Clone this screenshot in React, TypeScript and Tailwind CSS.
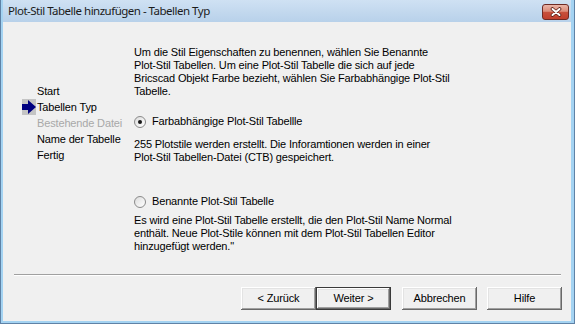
import type { ReactNode } from "react";

const steps = [
  { label: "Start", active: false, disabled: false },
  { label: "Tabellen Typ", active: true, disabled: false },
  { label: "Bestehende Datei", active: false, disabled: true },
  { label: "Name der Tabelle", active: false, disabled: false },
  { label: "Fertig", active: false, disabled: false },
];

function StepArrow() {
  return (
    <svg width="14" height="16" viewBox="0 0 14 16">
      <rect width="14" height="16" fill="#c4c4c4" />
      <polygon points="0,5 6,5 6,1 14,8 6,15 6,11 0,11" fill="#000080" />
    </svg>
  );
}

function CloseButton() {
  return (
    <div className="mt-[1px] flex h-[16px] w-[27px] items-center justify-center rounded-[3px] border border-[#6e2a24] bg-[linear-gradient(#eab5a8_0%,#dc8c7a_45%,#c7503c_52%,#c13f2d_100%)]">
      <svg width="12" height="10" viewBox="0 0 12 10">
        <path d="M2.5 2 L9.5 8 M9.5 2 L2.5 8" stroke="#5c1f18" strokeWidth="3.6" strokeLinecap="round" />
        <path d="M2.5 2 L9.5 8 M9.5 2 L2.5 8" stroke="#ffffff" strokeWidth="2" strokeLinecap="round" />
      </svg>
    </div>
  );
}

function Radio({ checked = false, label, className = "" }: { checked?: boolean; label: string; className?: string }) {
  return (
    <div className={`flex h-[13px] items-center ${className}`}>
      <span className="flex h-[12px] w-[12px] shrink-0 items-center justify-center rounded-full border border-[#8a8a8a] bg-[linear-gradient(135deg,#dcdcdc,#ffffff)]">
        {checked ? <span className="h-[4px] w-[4px] rounded-full bg-[#161616]" /> : null}
      </span>
      <span className="ml-[6px] whitespace-nowrap leading-[13px]">{label}</span>
    </div>
  );
}

function WizardButton({ children, isDefault = false }: { children: ReactNode; isDefault?: boolean }) {
  return (
    <button
      className={
        isDefault
          ? "flex h-[23px] w-[75px] items-center justify-center border border-[#3a3a3a] bg-[#f0f0f0] shadow-[inset_-1px_-1px_#696969,inset_1px_1px_#ffffff,inset_-2px_-2px_#a0a0a0,inset_2px_2px_#e3e3e3]"
          : "flex h-[23px] w-[75px] items-center justify-center bg-[#f0f0f0] shadow-[inset_-1px_-1px_#696969,inset_1px_1px_#ffffff,inset_-2px_-2px_#a0a0a0,inset_2px_2px_#e3e3e3]"
      }
    >
      {children}
    </button>
  );
}

export default function App() {
  return (
    <div className="h-[324px] w-[575px] border-x border-b border-[#5f82a6] bg-[#f0f0f0] font-['Liberation_Sans',Arial,sans-serif] text-[11px] tracking-[-0.15px] text-black">
      <div className="flex h-full flex-col border-b-2 border-l-2 border-r-[3px] border-[#a4d3f2]">
        <div className="flex h-[22px] shrink-0 items-center justify-between bg-gradient-to-b from-[#cfe1f3] to-[#b8d1ea] pl-[5px] pr-[2px]">
          <span className="whitespace-nowrap font-['Noto_Sans',sans-serif] text-[11.5px] tracking-[-0.5px] text-[#1b1b1b]">
            Plot-Stil Tabelle hinzufügen - Tabellen Typ
          </span>
          <CloseButton />
        </div>

        <div className="flex flex-1 flex-col">
          <div className="flex h-[252px]">
            <div className="w-[131px] shrink-0 pl-[19px] pt-[61px]">
              {steps.map((step) => (
                <div key={step.label} className="flex h-[16px] items-center">
                  <span className="mr-[1px] h-[16px] w-[14px] shrink-0">{step.active ? <StepArrow /> : null}</span>
                  <span className={step.disabled ? "whitespace-nowrap leading-[16px] text-[#a8a8a8]" : "whitespace-nowrap leading-[16px]"}>
                    {step.label}
                  </span>
                </div>
              ))}
            </div>

            <div className="pt-[24px]">
              <p className="whitespace-nowrap leading-[13px]">
                Um die Stil Eigenschaften zu benennen, wählen Sie Benannte
                <br />
                Plot-Stil Tabellen. Um eine Plot-Stil Tabelle die sich auf jede
                <br />
                Bricscad Objekt Farbe bezieht, wählen Sie Farbabhängige Plot-Stil
                <br />
                Tabelle.
              </p>
              <Radio checked label="Farbabhängige Plot-Stil Tabellle" className="mt-[17px]" />
              <p className="mt-[10px] whitespace-nowrap leading-[13px]">
                255 Plotstile werden erstellt. Die Inforamtionen werden in einer
                <br />
                Plot-Stil Tabellen-Datei (CTB) gespeichert.
              </p>
              <Radio label="Benannte Plot-Stil Tabelle" className="mt-[31px]" />
              <p className="mt-[6px] whitespace-nowrap leading-[13px]">
                Es wird eine Plot-Stil Tabelle erstellt, die den Plot-Stil Name Normal
                <br />
                enthält. Neue Plot-Stile können mit dem Plot-Stil Tabellen Editor
                <br />
                hinzugefügt werden."
              </p>
            </div>
          </div>

          <div className="ml-[11px] mr-[10px] h-[2px] border-b border-t border-b-white border-t-[#a0a0a0]" />

          <div className="mr-[9px] mt-[11px] flex justify-end">
            <WizardButton>&lt; Zurück</WizardButton>
            <WizardButton isDefault>Weiter &gt;</WizardButton>
            <span className="w-[11px]" />
            <WizardButton>Abbrechen</WizardButton>
            <span className="w-[10px]" />
            <WizardButton>Hilfe</WizardButton>
          </div>
        </div>
      </div>
    </div>
  );
}
